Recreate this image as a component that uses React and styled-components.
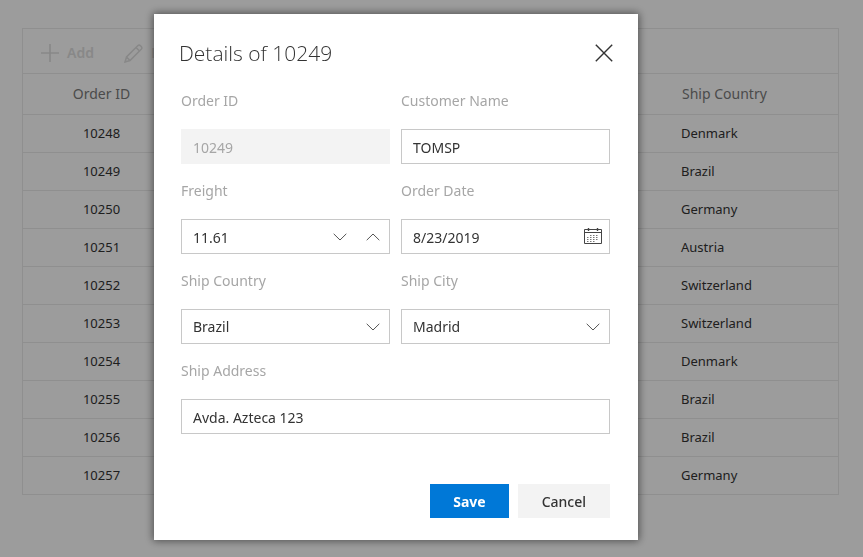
import React, { useState } from "react";
import styled, { createGlobalStyle } from "styled-components";

const GlobalStyle = createGlobalStyle`
  * {
    box-sizing: border-box;
  }
  body {
    margin: 0;
    background-color: #ffffff;
    font-family: "Noto Sans", "Open Sans", sans-serif;
    font-size: 14px;
    color: #333333;
  }
  button,
  input,
  select {
    font: inherit;
    color: inherit;
  }
`;
const Page = styled.main`
  min-height: 100vh;
  padding: 28px 24px 28px 22px;
`;
const Grid = styled.div`
  border: 1px solid #eaeaea;
`;
const Toolbar = styled.div`
  display: flex;
  align-items: center;
  gap: 30px;
  height: 45px;
  padding: 4px 18px 0;
  border-bottom: 1px solid #eaeaea;
`;
const ToolbarButton = styled.button`
  display: flex;
  align-items: center;
  gap: 8px;
  padding: 0;
  border: 0;
  background: none;
  color: #dedede;
  font-weight: 600;
  line-height: 20px;
`;
const Table = styled.table`
  width: 100%;
  border-collapse: collapse;
  table-layout: fixed;
`;
const HeadCell = styled.th`
  width: ${(props) => props.$width || "auto"};
  height: 40px;
  padding: 0 11px;
  border-bottom: 1px solid #eaeaea;
  color: #7b7b7b;
  font-weight: 400;
  text-align: ${(props) => props.$align || "left"};
`;
const Cell = styled.td`
  height: 38px;
  padding: 0 10px;
  font-size: 13px;
  text-align: ${(props) => props.$align || "left"};
  tr:not(:last-child) > & {
    border-bottom: 1px solid #eaeaea;
  }
`;
const Overlay = styled.div`
  position: fixed;
  inset: 0;
  overflow: auto;
  padding: 14px 24px 14px 154px;
  background-color: rgba(0, 0, 0, 0.39);
`;
const Dialog = styled.section`
  width: 100%;
  max-width: 484px;
  padding: 25px 28px 22px 27px;
  background-color: #ffffff;
  box-shadow: 0 0 8px 1px rgba(0, 0, 0, 0.5);
`;
const DialogHeader = styled.header`
  display: flex;
  align-items: center;
  justify-content: space-between;
  margin: 0 -3px 24px -2px;
`;
const Title = styled.h1`
  margin: 0;
  font-family: "Open Sans", sans-serif;
  font-size: 21px;
  font-weight: 300;
  line-height: 28px;
`;
const IconButton = styled.button`
  display: flex;
  flex-shrink: 0;
  align-items: center;
  justify-content: center;
  width: ${(props) => props.$width || "18px"};
  padding: 0;
  border: 0;
  background: none;
`;
const Fields = styled.div`
  display: grid;
  grid-template-columns: repeat(2, minmax(0, 1fr));
  gap: 17px 11px;
`;
const Field = styled.div`
  grid-column: ${(props) => (props.$wide ? "1 / -1" : "auto")};
`;
const Label = styled.label`
  display: block;
  margin-bottom: 18px;
  color: #a6a6a6;
  line-height: 20px;
`;
const Control = styled.div`
  position: relative;
  display: flex;
  height: 35px;
  border: 1px solid ${(props) => (props.$disabled ? "#f3f3f3" : "#c8c8c8")};
  background-color: ${(props) => (props.$disabled ? "#f3f3f3" : "#ffffff")};
`;
const Input = styled.input`
  flex: 1;
  min-width: 0;
  padding: 2px 11px 0;
  border: 0;
  outline: 0;
  background: none;
  &:disabled {
    color: #a6a6a6;
  }
`;
const Select = styled.select`
  flex: 1;
  min-width: 0;
  padding: 0 32px 0 11px;
  border: 0;
  outline: 0;
  appearance: none;
  background: none;
`;
const SelectArrow = styled.span`
  position: absolute;
  top: 0;
  right: 0;
  display: flex;
  align-items: center;
  justify-content: center;
  width: 33px;
  height: 100%;
  pointer-events: none;
`;
const DialogFooter = styled.footer`
  display: flex;
  justify-content: flex-end;
  gap: 9px;
  margin-top: 50px;
`;
const Button = styled.button`
  height: 34px;
  padding: 0 ${(props) => (props.$primary ? "23px" : "24px")};
  border: 0;
  background-color: ${(props) => (props.$primary ? "#0078d7" : "#f3f3f3")};
  color: ${(props) => (props.$primary ? "#ffffff" : "#333333")};
  font-weight: ${(props) => (props.$primary ? 700 : 500)};
`;

const orders = [
  { id: 10248, country: "Denmark" },
  { id: 10249, country: "Brazil" },
  { id: 10250, country: "Germany" },
  { id: 10251, country: "Austria" },
  { id: 10252, country: "Switzerland" },
  { id: 10253, country: "Switzerland" },
  { id: 10254, country: "Denmark" },
  { id: 10255, country: "Brazil" },
  { id: 10256, country: "Brazil" },
  { id: 10257, country: "Germany" },
];

const AddIcon = () => (
  <svg width="18" height="18" fill="none" stroke="currentColor" strokeWidth="1.6">
    <path d="M9 0v18M0 9h18" />
  </svg>
);
const EditIcon = () => (
  <svg width="19" height="19" fill="none" stroke="currentColor" strokeWidth="1.5">
    <path d="M1 18l1.5-5L13.7 1.8q1.4-1.3 2.8 0l.7.7q1.3 1.4 0 2.8L6 16.5zM12 3.5l3.5 3.5M2.5 13l3.5 3.5" />
  </svg>
);
const CloseIcon = () => (
  <svg width="18" height="18" fill="none" stroke="#333333" strokeWidth="1.4">
    <path d="M.8.8l16.4 16.4M17.2.8L.8 17.2" />
  </svg>
);
const Chevron = ({ up }) => (
  <svg width="14" height="8" fill="none" stroke="#555555" strokeWidth="1">
    <path d={up ? "M.7 7.2L7 1l6.3 6.2" : "M.7.8L7 7 13.3.8"} />
  </svg>
);
const CalendarIcon = () => (
  <svg width="18" height="17" fill="none" stroke="#444444" strokeWidth="1">
    <path d="M.5 1.5h17v14H.5zM.5 4.5h17" />
    <path d="M4.5 0v3M13.5 0v3" strokeWidth="1.4" />
    <path
      d="M6 7.5h9M3 9.5h12M3 11.5h12M3 13.5h9"
      stroke="#777777"
      strokeDasharray="1.5 1.5"
    />
  </svg>
);

const SelectField = ({ id, label, value, options, onChange }) => (
  <Field>
    <Label htmlFor={id}>{label}</Label>
    <Control>
      <Select id={id} name={id} value={value} onChange={onChange}>
        {options.map((option) => (
          <option key={option}>{option}</option>
        ))}
      </Select>
      <SelectArrow>
        <Chevron />
      </SelectArrow>
    </Control>
  </Field>
);

export default () => {
  const [order, setOrder] = useState({
    customerName: "TOMSP",
    freight: "11.61",
    orderDate: "8/23/2019",
    shipCountry: "Brazil",
    shipCity: "Madrid",
    shipAddress: "Avda. Azteca 123",
  });
  const handleChange = (e) =>
    setOrder({ ...order, [e.target.name]: e.target.value });
  const stepFreight = (step) =>
    setOrder({ ...order, freight: (Number(order.freight) + step).toFixed(2) });

  return (
    <>
      <GlobalStyle />
      <Page>
        <Grid>
          <Toolbar>
            <ToolbarButton type="button">
              <AddIcon />
              Add
            </ToolbarButton>
            <ToolbarButton type="button">
              <EditIcon />
              Edit
            </ToolbarButton>
          </Toolbar>
          <Table>
            <thead>
              <tr>
                <HeadCell $width="157px" $align="center">
                  Order ID
                </HeadCell>
                <HeadCell />
                <HeadCell $width="167px">Ship Country</HeadCell>
              </tr>
            </thead>
            <tbody>
              {orders.map((data) => (
                <tr key={data.id}>
                  <Cell $align="center">{data.id}</Cell>
                  <Cell />
                  <Cell>{data.country}</Cell>
                </tr>
              ))}
            </tbody>
          </Table>
        </Grid>
      </Page>
      <Overlay>
        <Dialog role="dialog" aria-labelledby="dialogTitle">
          <DialogHeader>
            <Title id="dialogTitle">Details of 10249</Title>
            <IconButton type="button" aria-label="Close">
              <CloseIcon />
            </IconButton>
          </DialogHeader>
          <Fields>
            <Field>
              <Label htmlFor="orderId">Order ID</Label>
              <Control $disabled>
                <Input id="orderId" value="10249" disabled readOnly />
              </Control>
            </Field>
            <Field>
              <Label htmlFor="customerName">Customer Name</Label>
              <Control>
                <Input
                  id="customerName"
                  name="customerName"
                  value={order.customerName}
                  onChange={handleChange}
                />
              </Control>
            </Field>
            <Field>
              <Label htmlFor="freight">Freight</Label>
              <Control>
                <Input
                  id="freight"
                  name="freight"
                  value={order.freight}
                  onChange={handleChange}
                />
                <IconButton
                  type="button"
                  aria-label="Decrease"
                  $width="33px"
                  onClick={() => stepFreight(-1)}
                >
                  <Chevron />
                </IconButton>
                <IconButton
                  type="button"
                  aria-label="Increase"
                  $width="33px"
                  onClick={() => stepFreight(1)}
                >
                  <Chevron up />
                </IconButton>
              </Control>
            </Field>
            <Field>
              <Label htmlFor="orderDate">Order Date</Label>
              <Control>
                <Input
                  id="orderDate"
                  name="orderDate"
                  value={order.orderDate}
                  onChange={handleChange}
                />
                <IconButton type="button" aria-label="Pick a date" $width="33px">
                  <CalendarIcon />
                </IconButton>
              </Control>
            </Field>
            <SelectField
              id="shipCountry"
              label="Ship Country"
              value={order.shipCountry}
              options={["Brazil", "Denmark", "Germany"]}
              onChange={handleChange}
            />
            <SelectField
              id="shipCity"
              label="Ship City"
              value={order.shipCity}
              options={["Madrid", "Berlin"]}
              onChange={handleChange}
            />
            <Field $wide>
              <Label htmlFor="shipAddress">Ship Address</Label>
              <Control>
                <Input
                  id="shipAddress"
                  name="shipAddress"
                  value={order.shipAddress}
                  onChange={handleChange}
                />
              </Control>
            </Field>
          </Fields>
          <DialogFooter>
            <Button type="button" $primary>
              Save
            </Button>
            <Button type="button">Cancel</Button>
          </DialogFooter>
        </Dialog>
      </Overlay>
    </>
  );
};
